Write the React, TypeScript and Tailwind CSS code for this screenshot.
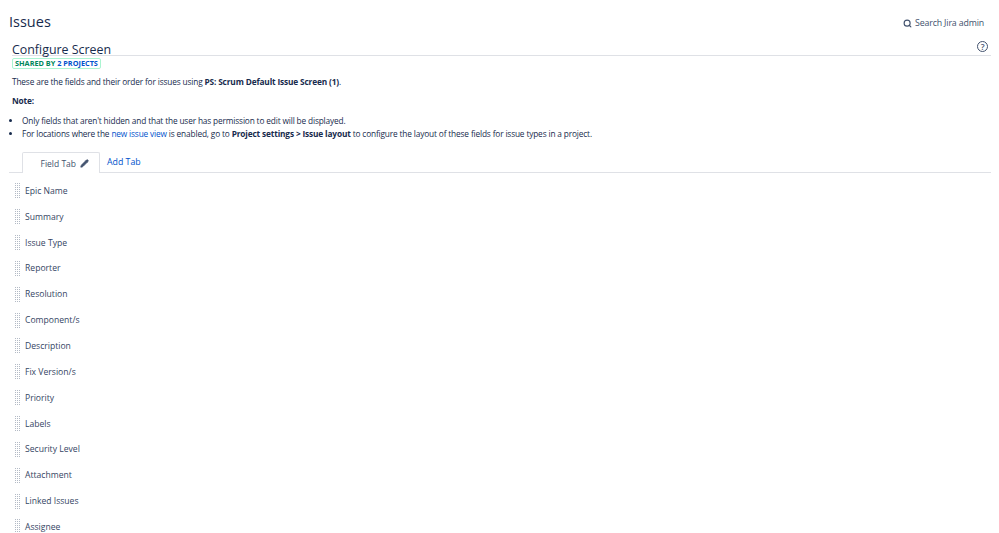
import { Search, Pencil } from 'lucide-react'

const FIELDS = [
  'Epic Name',
  'Summary',
  'Issue Type',
  'Reporter',
  'Resolution',
  'Component/s',
  'Description',
  'Fix Version/s',
  'Priority',
  'Labels',
  'Security Level',
  'Attachment',
  'Linked Issues',
  'Assignee',
]

function DragHandle() {
  return (
    <span className="w-[6px] h-[16px] shrink-0 bg-[conic-gradient(#b3bac5_0_25%,#ffffff_0_100%)] bg-[length:2px_2px]" />
  )
}

export default function App() {
  return (
    <div className="w-[999px] h-[533px] overflow-hidden bg-white text-[#172b4d] font-['Open_Sans',sans-serif] text-[8.3px] tracking-[-0.15px] leading-[13px]">
      {/* Header */}
      <div className="flex items-center justify-between h-[44px] pl-[9px] pr-[15px]">
        <h1 className="text-[14.5px] tracking-normal font-medium leading-[20px]">Issues</h1>
        <div className="flex items-center gap-[3px] pt-[2px] text-[#42526e] text-[8.8px]">
          <Search size={9} strokeWidth={3} />
          <span>Search Jira admin</span>
        </div>
      </div>

      {/* Title */}
      <div className="ml-[12px] mr-[8px] h-[12px] border-b border-[#dfe1e6] flex justify-between">
        <h2 className="text-[12.4px] tracking-normal font-normal leading-[11px] whitespace-nowrap">Configure Screen</h2>
        <span className="w-[11px] h-[11px] -mt-[3px] mr-[3px] rounded-full border border-[#42526e] text-[#42526e] text-[8.5px] font-semibold leading-[9px] text-center">?</span>
      </div>

      <div className="pl-[12px]">
        <span className="inline-block mt-[2px] h-[11px] px-[2px] border border-[#abf5d1] rounded-[2px] text-[7.3px] tracking-normal leading-[9px] font-bold whitespace-nowrap">
          <span className="text-[#00875a]">SHARED BY </span>
          <span className="text-[#0052cc]">2 PROJECTS</span>
        </span>
        <p className="mt-[6px]">
          These are the fields and their order for issues using <b className="font-bold">PS: Scrum Default Issue Screen (1)</b>.
        </p>
        <p className="mt-[6px] font-bold">Note:</p>
        <ul className="mt-[7px] list-disc pl-[10px]">
          <li>Only fields that aren't hidden and that the user has permission to edit will be displayed.</li>
          <li>
            For locations where the <a className="text-[#0052cc]">new issue view</a> is enabled, go to{' '}
            <b className="font-bold">Project settings &gt; Issue layout</b> to configure the layout of these fields for issue types in a project.
          </li>
        </ul>
      </div>

      {/* Tabs */}
      <div className="mt-[12px] ml-[9px] mr-[8px] h-[21px] border-b border-[#dfe1e6] flex pl-[13px] items-end text-[8.5px] tracking-normal">
        <div className="h-[21px] w-[78px] -mb-px bg-white border border-b-0 border-[#dfe1e6] rounded-t-[2px] flex items-center justify-end gap-[4px] pr-[10px] text-[#42526e]">
          <span>Field Tab</span>
          <Pencil size={9} fill="currentColor" />
        </div>
        <a className="ml-[7px] h-[21px] leading-[22px] text-[8.8px] text-[#0052cc]">Add Tab</a>
      </div>

      {/* Fields */}
      <ul className="mt-[5.5px] pl-[14px] text-[8.6px] tracking-normal">
        {FIELDS.map(f => (
          <li key={f} className="h-[25.85px] flex items-center gap-[5px] text-[#344563]">
            <DragHandle />
            <span>{f}</span>
          </li>
        ))}
      </ul>
    </div>
  )
}
